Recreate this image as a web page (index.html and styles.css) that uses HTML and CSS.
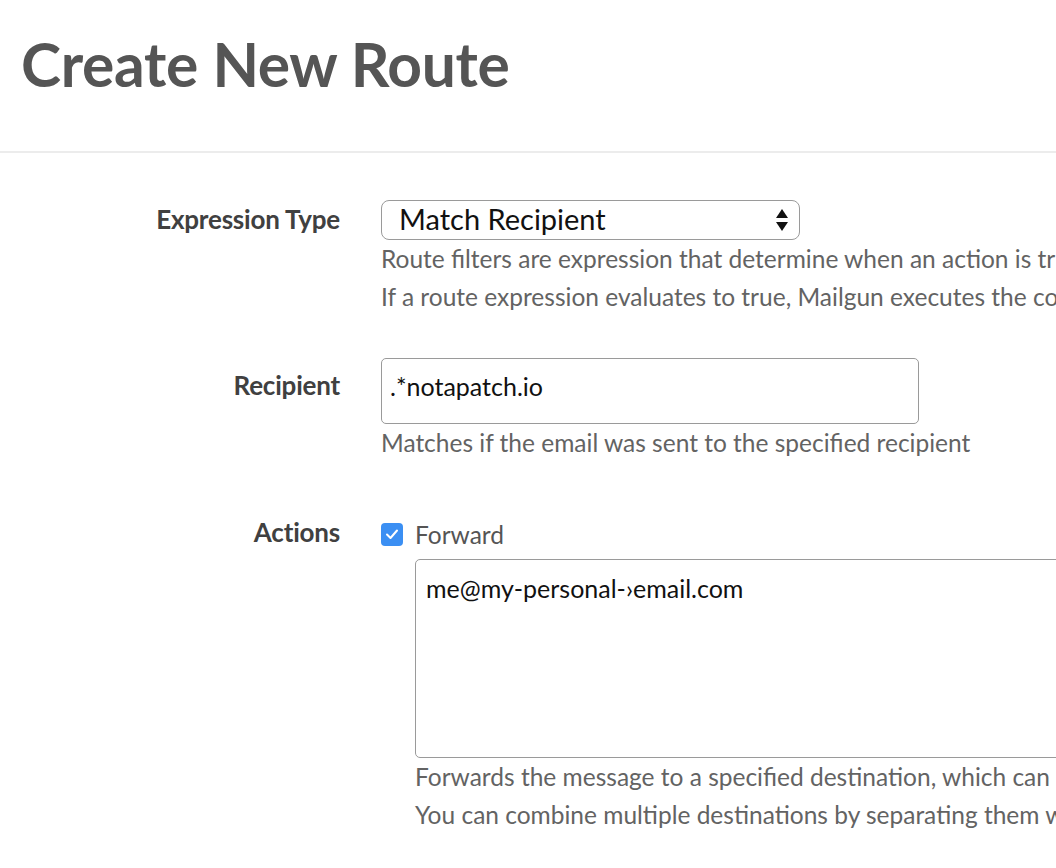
FILE: index.html
```html
<!DOCTYPE html>
<html>
<head>
<meta charset="utf-8">
<link rel="stylesheet" href="styles.css">
</head>
<body>
<header class="page-head">
  <h1 class="title">Create New Route</h1>
</header>
<form class="form">
  <div class="row row-expr">
    <label class="label">Expression Type</label>
    <div class="field">
      <div class="select">
        <span class="select-value">Match Recipient</span>
        <svg class="arrows" width="14" height="26" viewBox="0 0 14 26"><path d="M7 2 L13 11 L1 11 Z" fill="#111"/><path d="M1 15 L13 15 L7 24 Z" fill="#111"/></svg>
      </div>
      <p class="help">Route filters are expression that determine when an action is triggered.</p>
      <p class="help">If a route expression evaluates to true, Mailgun executes the corresponding action.</p>
    </div>
  </div>
  <div class="row row-recipient">
    <label class="label">Recipient</label>
    <div class="field">
      <div class="input">.*notapatch.io</div>
      <p class="help">Matches if the email was sent to the specified recipient</p>
    </div>
  </div>
  <div class="row row-actions">
    <label class="label">Actions</label>
    <div class="field">
      <div class="check-line">
        <span class="checkbox"><svg width="22" height="22" viewBox="0 0 22 22"><path d="M6 11.5 L9.5 15 L16 7.5" fill="none" stroke="#fff" stroke-width="2" stroke-linecap="round" stroke-linejoin="round"/></svg></span>
        <span class="check-label">Forward</span>
      </div>
      <div class="sub">
        <div class="textarea">me@my-personal-›email.com</div>
        <p class="help">Forwards the message to a specified destination, which can be another email address or a URL.</p>
        <p class="help">You can combine multiple destinations by separating them with a comma.</p>
      </div>
    </div>
  </div>
</form>
</body>
</html>
```

FILE: styles.css
```css
html, body {
  margin: 0;
  padding: 0;
  background: #fff;
  overflow: hidden;
}
body {
  font-family: "Lato", "Open Sans", sans-serif;
  width: 1056px;
  height: 868px;
  overflow: hidden;
}
.page-head {
  border-bottom: 2px solid #ececec;
  height: 153px;
  box-sizing: border-box;
  padding: 24px 0 0 21px;
}
.title {
  margin: 0;
  font-size: 60.5px;
  font-weight: 700;
  color: #555;
  line-height: 80px;
  letter-spacing: -0.3px;
}
.form {
  padding-top: 47px;
  overflow: hidden;
}
.row {
  display: flex;
  align-items: flex-start;
}
.label {
  width: 340px;
  flex: none;
  text-align: right;
  font-size: 26px;
  font-weight: 700;
  color: #404040;
  box-sizing: border-box;
  letter-spacing: -0.2px;
}
.field {
  margin-left: 41px;
  white-space: nowrap;
  min-width: 0;
}
.row-expr .label { padding-top: 3px; }
.select {
  width: 419px;
  height: 40px;
  box-sizing: border-box;
  border: 1.5px solid #9a9a9a;
  border-radius: 8px;
  display: flex;
  align-items: center;
  justify-content: space-between;
  padding: 0 10px 0 17px;
}
.select-value {
  font-size: 29px;
  color: #111;
  margin-top: -3px;
}
.arrows { display: block; }
.help {
  margin: 0;
  font-size: 24.5px;
  line-height: 38px;
  color: #636363;
}
.row-recipient {
  margin-top: 42px;
}
.row-recipient .label { padding-top: 11px; }
.input {
  width: 538px;
  height: 66px;
  box-sizing: border-box;
  border: 1.5px solid #9a9a9a;
  border-radius: 5px;
  padding: 12px 8px 0;
  font-size: 25px;
  color: #111;
}
.row-actions {
  margin-top: 53px;
}
.row-actions .label { padding-top: 1px; }
.check-line {
  display: flex;
  align-items: center;
  height: 44px;
  margin-top: -3px;
  margin-bottom: 3px;
}
.checkbox {
  width: 22px;
  height: 23px;
  border-radius: 4px;
  background: #3b8ff3;
  display: inline-block;
  margin-right: 12px;
}
.checkbox svg { display: block; }
.check-label {
  font-size: 24.5px;
  color: #555;
}
.sub {
  margin-left: 34px;
}
.textarea {
  width: 700px;
  height: 199px;
  box-sizing: border-box;
  border: 1.5px solid #9a9a9a;
  border-radius: 5px;
  padding: 13px 10px 0;
  font-size: 25px;
  color: #111;
}
```
